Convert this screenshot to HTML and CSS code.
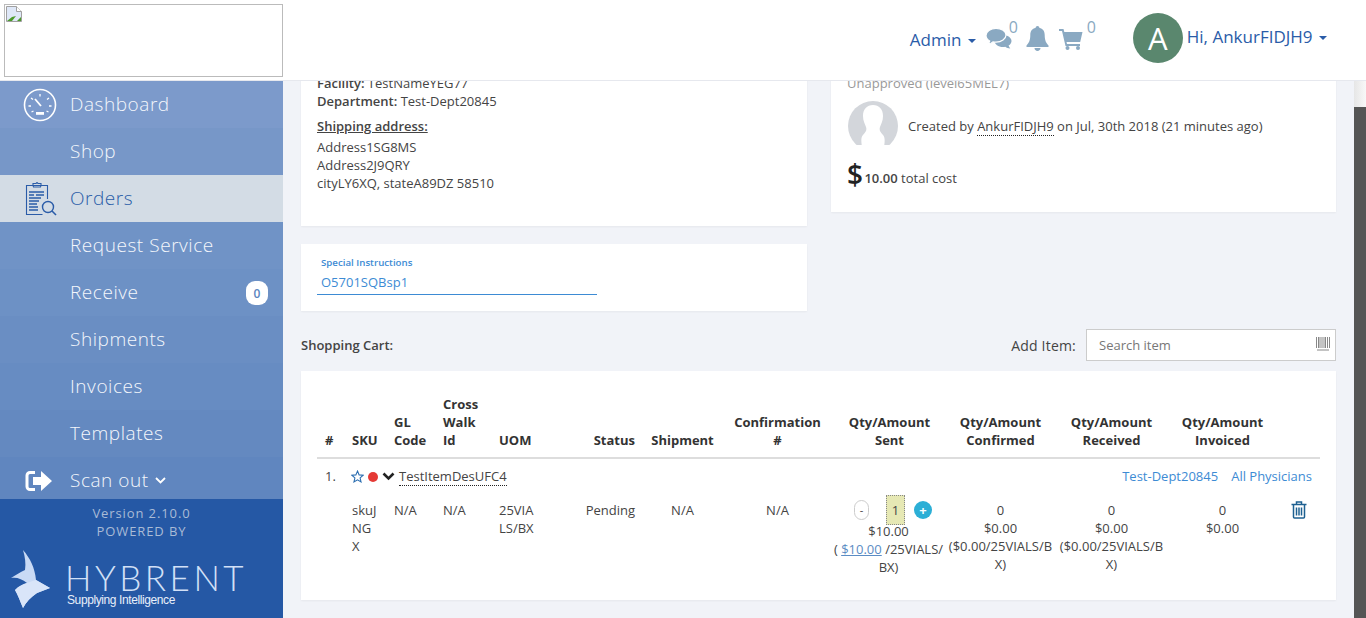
FILE: index.html
```html
<!DOCTYPE html>
<html lang="en">
<head>
  <meta charset="UTF-8">
  <title>Hybrent - Order</title>
  <link rel="stylesheet" href="styles.css">
</head>
<body>
  <header class="topbar">
    <div class="logo-box">
      <svg class="broken-img" width="16" height="16" viewBox="0 0 16 16">
        <path d="M.5.5h10l5 5v10H.5z" fill="#dfe8f8" stroke="#a0a0a0"/>
        <path d="M10.5.5v5h5" fill="#fff" stroke="#a0a0a0"/>
        <path d="M1 15l5-4 4-1-4 5z" fill="#4c9a2a"/>
        <path d="M11 15l4-4v4z" fill="#4c9a2a"/>
      </svg>
    </div>
    <nav class="topnav">
      <a class="admin-link">Admin <span class="caret"></span></a>
      <span class="top-icon chat">
        <svg width="26" height="21" viewBox="0 0 26 21">
          <path d="M17 7c-4.700 0-8.500 2.700-8.500 6s3.800 6 8.500 6c.8 0 1.600-.1 2.300-.2 1.200.9 3 1.600 5 1.700-.8-.8-1.400-1.800-1.700-2.900 1.800-1.100 2.900-2.800 2.900-4.600 0-3.300-3.800-6-8.500-6z" fill="#8aa9c2"/>
          <path d="M10 .5C4.500.5 0 3.700 0 7.600c0 2.200 1.400 4.200 3.700 5.500-.3 1.200-1 2.200-1.900 3 2-.2 3.800-1 5.100-2.200 1 .2 2 .3 3.100.3 5.500 0 10-3.200 10-7.100S15.500.5 10 .5z" fill="#8aa9c2" stroke="#fff" stroke-width="1.200"/>
        </svg>
        <sup>0</sup>
      </span>
      <span class="top-icon bell">
        <svg width="23" height="25" viewBox="0 0 23 25"><path d="M11.500 0c-1.100 0-1.800.8-1.800 1.800C6 2.600 4.300 5.400 4.300 9c0 5.500-1.500 8-3.800 10.500v1.500h22v-1.500C20.200 17 18.700 14.500 18.700 9c0-3.600-1.700-6.400-5.400-7.200 0-1-.7-1.800-1.800-1.800zM8.500 22c0 1.600 1.300 3 3 3s3-1.400 3-3z" fill="#8aa9c2"/></svg>
      </span>
      <span class="top-icon cart">
        <svg width="24" height="22" viewBox="0 0 24 22"><path d="M0 1h4.500l.8 3H23.500l-2.300 10H7.500l.5 2h13v2H6.500L3 3H0z" fill="#8aa9c2"/><circle cx="8.500" cy="20" r="2" fill="#8aa9c2"/><circle cx="19" cy="20" r="2" fill="#8aa9c2"/></svg>
        <sup>0</sup>
      </span>
      <span class="avatar">A</span>
      <a class="user-link">Hi, AnkurFIDJH9 <span class="caret"></span></a>
    </nav>
  </header>

  <div class="layout">
    <aside class="sidebar">
      <ul class="menu">
        <li class="menu-item shade-1">
          <svg class="menu-icon" width="34" height="34" viewBox="0 0 34 34" fill="none" stroke="#fff">
            <circle cx="17" cy="17" r="15.500" stroke-width="1.600"/>
            <path d="M17 6v2.500M8 10l2 1.500M26 10l-2 1.500M5.500 18H8M26 18h2.500M8.500 24l2-1M25.500 24l-2-1" stroke-width="1.300"/>
            <path d="M12 11l6 7" stroke-width="1.800"/>
            <path d="M13 24h8v2.800h-8z" fill="#fff" stroke="none"/>
          </svg>
          Dashboard
        </li>
        <li class="menu-item shade-2">Shop</li>
        <li class="menu-item active">
          <svg class="menu-icon orders" width="32" height="34" viewBox="0 0 32 34" fill="none" stroke="#2a5ca8" stroke-width="1.100">
            <path d="M22.500 17V3.500H1.500v29h16"/>
            <path d="M8 3.500V1.500h3l1-1 1 1h3v2l-.5 1.500H8.500z"/>
            <path d="M4 10h15M4 13h5M11 13h8M4 16h12M4 19h10M4 22h8M4 25h9M4 28h9" stroke-width="1.300"/>
            <circle cx="23" cy="25" r="5.500" stroke-width="1.400"/>
            <path d="M27 29l4 4" stroke-width="1.600"/>
          </svg>
          Orders
        </li>
        <li class="menu-item shade-3">Request Service</li>
        <li class="menu-item shade-4">Receive <span class="count">0</span></li>
        <li class="menu-item shade-5">Shipments</li>
        <li class="menu-item shade-6">Invoices</li>
        <li class="menu-item shade-7">Templates</li>
        <li class="menu-item shade-8">
          <svg class="menu-icon scan" width="28" height="22" viewBox="0 0 28 22">
            <path d="M10 2.500H5A3 3 0 0 0 2 5.500v11a3 3 0 0 0 3 3h5" fill="none" stroke="#fff" stroke-width="3"/>
            <path d="M8 7h8V1l11 10-11 10v-6H8z" fill="#fff"/>
          </svg>
          Scan out
          <svg class="small-chevron" width="11" height="7" viewBox="0 0 11 7" fill="none" stroke="#fff" stroke-width="1.800"><path d="M1 1l4.500 4.500L10 1"/></svg>
        </li>
      </ul>
      <div class="side-foot">
        <div class="version">Version 2.10.0</div>
        <div class="powered">POWERED BY</div>
        <div class="brand">
          <svg class="brand-mark" width="40" height="58" viewBox="0 0 40 58">
            <path d="M13 0c2 7 3 13 2 20-5 2-9 5-14 8 6-1 11 1 16 5-4 1-8 3-12 7 3 5 5 11 8 18 3-6 8-11 14-15l13-5-14-8C25 18 20 8 13 0z" fill="#c9daf5"/>
            <path d="M17 33c-4 1-8 3-12 7 3 5 5 11 8 18 3-6 8-11 14-15l13-5-14-8c-3 1-7 2-9 3z" fill="#d9e5f9"/>
          </svg>
          <div class="brand-text">
            <div class="brand-name">HYBRENT</div>
            <div class="brand-tag">Supplying Intelligence</div>
          </div>
        </div>
      </div>
    </aside>

    <main class="content">
      <div class="scroll-inner">
        <div class="row">
          <section class="card address-card">
            <p class="first-line"><b>Facility:</b> TestNameYEG77</p>
            <p><b>Department:</b> Test-Dept20845</p>
            <p class="ship-title">Shipping address:</p>
            <p>Address1SG8MS</p>
            <p>Address2J9QRY</p>
            <p>cityLY6XQ, stateA89DZ 58510</p>
          </section>
          <section class="card summary-card">
            <p class="approval first-line">Unapproved (level65MEL7)</p>
            <div class="created">
              <svg class="user-pic" width="50" height="50" viewBox="0 0 50 50">
                <defs><clipPath id="pic-clip"><path d="M0 0h50v44H0z"/></clipPath></defs>
                <g clip-path="url(#pic-clip)">
                  <circle cx="25" cy="25" r="25" fill="#d3d6db"/>
                  <path d="M25 4c-6 0-10 4-10 11 0 5 2 8 3 11 1 3 0 5-3 8-2 2-2 6-1 12h22c1-6 1-10-1-12-3-3-4-5-3-8 1-3 3-6 3-11 0-7-4-11-10-11z" fill="#fff"/>
                </g>
              </svg>
              <span>Created by <span class="dotted">AnkurFIDJH9</span> on Jul, 30th 2018 (21 minutes ago)</span>
            </div>
            <div class="total"><span class="dollar">$</span> <b>10.00</b> total cost</div>
          </section>
        </div>

        <div class="row">
          <section class="card notes-card">
            <label class="notes-label">Special Instructions</label>
            <div class="notes-value">O5701SQBsp1</div>
          </section>
        </div>

        <div class="cart-head">
          <b>Shopping Cart:</b>
          <div class="add-item">
            <span>Add Item:</span>
            <div class="search-box">
              Search item
              <svg class="barcode" width="14" height="14" viewBox="0 0 14 14" fill="none" stroke="#888"><path d="M.5 0v11M2.500 0v11M4 0v11M6 0v11M8 0v11M9.500 0v11M11.500 0v11M13.500 0v11M1 13h12" stroke-width="1"/></svg>
            </div>
          </div>
        </div>

        <section class="card cart-card">
          <table class="cart-table">
            <colgroup>
              <col><col><col><col><col><col><col><col><col><col><col><col><col>
            </colgroup>
            <thead>
              <tr>
                <th>#</th>
                <th>SKU</th>
                <th>GL Code</th>
                <th>Cross Walk Id</th>
                <th>UOM</th>
                <th class="end">Status</th>
                <th class="mid">Shipment</th>
                <th class="mid">Confirmation #</th>
                <th class="mid tight">Qty/Amount Sent</th>
                <th class="mid tight">Qty/Amount Confirmed</th>
                <th class="mid tight">Qty/Amount Received</th>
                <th class="mid tight">Qty/Amount Invoiced</th>
                <th></th>
              </tr>
            </thead>
            <tbody>
              <tr class="item-title">
                <td>1.</td>
                <td colspan="7">
                  <div class="item-name">
                    <svg width="13" height="13" viewBox="0 0 24 24" fill="none" stroke="#2a6db0" stroke-width="2"><path d="M12 2l3 7 7.500.7-5.700 5 1.700 7.300-6.500-3.900L5.500 22l1.700-7.300-5.700-5L9 9z"/></svg>
                    <span class="red-dot"></span>
                    <svg width="13" height="9" viewBox="0 0 13 9" fill="none" stroke="#222" stroke-width="2.600"><path d="M1.500 1.500l5 5 5-5"/></svg>
                    <span class="dotted">TestItemDesUFC4</span>
                  </div>
                </td>
                <td colspan="5" class="item-links"><a>Test-Dept20845</a><a>All Physicians</a></td>
              </tr>
              <tr class="item-detail">
                <td></td>
                <td class="breakall">skuJNGX</td>
                <td>N/A</td>
                <td>N/A</td>
                <td class="breakall">25VIALS/BX</td>
                <td class="end">Pending</td>
                <td class="mid">N/A</td>
                <td class="mid">N/A</td>
                <td class="mid flush">
                  <div class="qty">
                    <span class="qty-minus">-</span>
                    <span class="qty-val">1</span>
                    <span class="qty-plus">+</span>
                  </div>
                  <div>$10.00<br>( <a class="price-link">$10.00</a> /25VIALS/<wbr>BX)</div>
                </td>
                <td class="mid tight breakall">0<br>$0.00<br>($0.00/25VIALS/BX)</td>
                <td class="mid tight breakall">0<br>$0.00<br>($0.00/25VIALS/BX)</td>
                <td class="mid tight">0<br>$0.00</td>
                <td class="trash-cell">
                  <svg width="16" height="18" viewBox="0 0 16 18" fill="none" stroke="#1e6091" stroke-width="1.500"><path d="M.5 3.500h15M5.500 3V1h5v2M2.500 3.500v12.500a1 1 0 0 0 1 1h9a1 1 0 0 0 1-1V3.500M5.500 6.500v8M8 6.500v8M10.500 6.500v8"/></svg>
                </td>
              </tr>
            </tbody>
          </table>
        </section>
      </div>
      <div class="scrollbar"><div class="scroll-thumb"></div></div>
    </main>
  </div>
</body>
</html>
```

FILE: styles.css
```css
* {
  box-sizing: border-box;
}
html, body {
  height: 100%;
}
body {
  margin: 0;
  overflow: hidden;
  font-family: "Open Sans", sans-serif;
  font-size: 13px;
  color: #444;
  background-color: #f1f3f8;
  display: flex;
  flex-direction: column;
}
p {
  margin: 0;
}

/* top bar */
.topbar {
  height: 81px;
  flex: none;
  background: #fff;
  border-bottom: 1px solid #e6e8ee;
  display: flex;
  justify-content: space-between;
  padding: 4px 0 0 4px;
}
.logo-box {
  width: 279px;
  height: 73px;
  border: 1px solid #bbb;
  padding: 1px;
}
.broken-img {
  display: block;
}
.topnav {
  display: flex;
  align-items: flex-start;
  padding-right: 39px;
  color: #2a5ca8;
}
.admin-link {
  font-size: 17px;
  margin-top: 24px;
  margin-right: 10px;
}
.caret {
  display: inline-block;
  width: 0;
  height: 0;
  margin-left: 2px;
  vertical-align: middle;
  border-top: 4px solid #2a5ca8;
  border-left: 4px solid transparent;
  border-right: 4px solid transparent;
}
.top-icon {
  display: flex;
  color: #8aa9c2;
}
.top-icon svg {
  flex: none;
}
.top-icon sup {
  font-size: 16px;
  line-height: 16px;
  vertical-align: baseline;
}
.chat {
  margin-top: 24px;
  width: 39px;
}
.chat sup {
  margin-top: -9px;
  margin-left: -3px;
}
.bell {
  margin-top: 22px;
  width: 34px;
  padding-left: 1px;
}
.cart {
  margin-top: 24px;
  width: 74px;
}
.cart sup {
  margin-top: -9px;
  margin-left: 4px;
}
.avatar {
  width: 50px;
  height: 50px;
  margin-top: 9px;
  border-radius: 50%;
  background: #5a876e;
  color: #fff;
  font-size: 31px;
  line-height: 50px;
  text-align: center;
}
.user-link {
  font-size: 17px;
  margin-top: 21px;
  margin-left: 4px;
}

/* sidebar */
.layout {
  flex: 1;
  display: flex;
  min-height: 0;
}
.sidebar {
  width: 283px;
  flex: none;
  background: #2558a5;
  display: flex;
  flex-direction: column;
}
.menu {
  list-style: none;
  margin: 0;
  padding: 0;
}
.menu-item {
  position: relative;
  height: 47px;
  padding: 0 0 2px 70px;
  display: flex;
  align-items: center;
  color: #f4f7fc;
  font-size: 19px;
  font-weight: 300;
  letter-spacing: .55px;
}
.menu-item.shade-1 { background: #7c9acb; }
.menu-item.shade-2 { background: #7797c8; }
.menu-item.active { background: #d3dce5; color: #2a5ca8; }
.menu-item.shade-3 { background: #7093c6; }
.menu-item.shade-4 { background: #6d91c5; }
.menu-item.shade-5 { background: #6a8ec3; }
.menu-item.shade-6 { background: #678cc2; }
.menu-item.shade-7 { background: #6489c0; }
.menu-item.shade-8 { background: #6086bf; height: 42px; padding: 4px 0 0 70px; }
.menu-icon {
  position: absolute;
  left: 23px;
  top: 7px;
}
.menu-icon.orders {
  left: 25px;
  top: 7px;
}
.menu-icon.scan {
  left: 25px;
  top: 13px;
}
.small-chevron {
  margin-left: 6px;
}
.count {
  position: absolute;
  right: 15px;
  top: 12px;
  width: 22px;
  height: 24px;
  border-radius: 9px;
  background: #fff;
  color: #5b85c0;
  font-size: 12px;
  font-weight: 600;
  letter-spacing: 0;
  line-height: 25px;
  text-align: center;
}
.side-foot {
  flex: 1;
  text-align: center;
  color: #a9bbd6;
  font-size: 13px;
  letter-spacing: .9px;
  line-height: 18px;
  padding-top: 5px;
}
.brand {
  display: flex;
  text-align: left;
  margin-top: 10px;
  padding-left: 10px;
}
.brand-text {
  margin-left: 17px;
  padding-top: 12px;
}
.brand-name {
  font-family: Lato, sans-serif;
  font-size: 35px;
  line-height: 30px;
  letter-spacing: 3.500px;
  margin-left: -2px;
  color: #d2e0f7;
  font-weight: 300;
}
.brand-tag {
  font-family: "Liberation Sans", sans-serif;
  font-size: 12px;
  line-height: 14px;
  letter-spacing: -.4px;
  margin-top: 1px;
  color: #e8effa;
}

/* main content */
.content {
  flex: 1;
  position: relative;
  overflow: hidden;
}
.scroll-inner {
  margin-top: -6px;
  padding: 0 30px 0 18px;
}
.row {
  display: flex;
  gap: 24px;
  margin-bottom: 18px;
}
.card {
  background: #fff;
  box-shadow: 0 1px 2px rgba(0, 0, 0, .05);
}
.first-line {
  margin-top: -1px;
}
.address-card {
  width: 506px;
  height: 151px;
  padding: 0 16px;
  line-height: 18px;
}
.address-card b {
  color: #444;
  font-weight: 600;
}
.ship-title {
  font-weight: 600;
  text-decoration: underline;
  margin: 7px 0 3px;
}
.summary-card {
  width: 505px;
  height: 137px;
  padding: 0 16px;
}
.approval {
  color: #999;
  line-height: 18px;
}
.created {
  display: flex;
  align-items: center;
  gap: 10px;
  margin-top: 9px;
  padding-left: 1px;
}
.dotted {
  border-bottom: 1px dotted #222;
}
.total {
  margin-top: 6px;
}
.total b {
  font-weight: 600;
}
.dollar {
  font-size: 28px;
  line-height: 34px;
  letter-spacing: -2px;
  color: #222;
  font-weight: 600;
  vertical-align: -2px;
}
.notes-card {
  width: 506px;
  height: 67px;
  padding: 13px 16px 0;
}
.notes-label {
  display: block;
  font-size: 9.700px;
  font-weight: 600;
  color: #3d8bd4;
  padding-left: 4px;
  line-height: 12px;
}
.notes-value {
  width: 280px;
  padding: 4px 4px 3px;
  line-height: 18px;
  color: #3d8bd4;
  border-bottom: 1px solid #3d8bd4;
}
.cart-head {
  display: flex;
  justify-content: space-between;
  align-items: center;
  height: 32px;
}
.cart-head b {
  font-weight: 600;
}
.add-item {
  display: flex;
  align-items: center;
  gap: 10px;
  font-size: 14px;
  letter-spacing: .2px;
}
.search-box {
  position: relative;
  width: 250px;
  height: 32px;
  background: #fff;
  border: 1px solid #ccc;
  padding-left: 12px;
  font-size: 13px;
  letter-spacing: 0;
  line-height: 30px;
  color: #777;
}
.barcode {
  position: absolute;
  right: 5px;
  top: 7px;
}
.cart-card {
  margin-top: 10px;
  width: 1035px;
  height: 229px;
  padding: 24px 16px 0;
}
.cart-table {
  width: 1003px;
  table-layout: fixed;
  border-collapse: collapse;
  line-height: 18px;
}
.cart-table col:nth-child(1) { width: 27px; }
.cart-table col:nth-child(2) { width: 42px; }
.cart-table col:nth-child(3) { width: 49px; }
.cart-table col:nth-child(4) { width: 56px; }
.cart-table col:nth-child(5) { width: 56px; }
.cart-table col:nth-child(6) { width: 96px; }
.cart-table col:nth-child(7) { width: 79px; }
.cart-table col:nth-child(n+8) { width: 111px; }
.cart-table col:nth-child(13) { width: 43px; }
.cart-table th {
  text-align: left;
  vertical-align: bottom;
  font-weight: 700;
  color: #333;
  padding: 0 8px 8px;
  border-bottom: 2px solid #ddd;
  height: 63px;
}
.cart-table td {
  padding: 0 8px;
  vertical-align: top;
}
.cart-table th.mid, .cart-table td.mid {
  text-align: center;
}
.cart-table th.end, .cart-table td.end {
  text-align: right;
}
.cart-table th.tight, .cart-table td.tight {
  padding-left: 4px;
  padding-right: 2px;
}
.cart-table td.flush {
  padding-left: 0;
  padding-right: 0;
}
.item-title td {
  padding-top: 8px;
  padding-bottom: 15px;
}
.item-name {
  display: flex;
  align-items: center;
  gap: 4px;
  margin-left: -1px;
  line-height: 18px;
}
.red-dot {
  width: 10px;
  height: 10px;
  border-radius: 50%;
  background: #e53935;
}
.cart-table td.item-links {
  text-align: right;
  color: #3d8bd4;
}
.item-links a {
  margin-left: 13px;
}
.breakall {
  word-break: break-all;
}
.qty {
  display: flex;
  align-items: center;
  justify-content: center;
  height: 30px;
  margin: -6px 0 -3px 9px;
}
.qty-minus {
  width: 15px;
  height: 20px;
  border: 1px solid #ccc;
  border-radius: 8px;
  font-size: 11px;
  line-height: 18px;
  margin-right: 17px;
}
.qty-val {
  width: 19px;
  height: 30px;
  background: #e6e8b4;
  border: 1px dotted #888;
  line-height: 28px;
  margin-right: 9px;
}
.qty-plus {
  width: 18px;
  height: 18px;
  border-radius: 50%;
  background: #2cafd6;
  color: #fff;
  font-weight: 700;
  line-height: 18px;
}
.price-link {
  color: #5b8cc4;
  text-decoration: underline;
}
.cart-table td.trash-cell {
  text-align: right;
  padding-right: 13px;
}

.scrollbar {
  position: absolute;
  top: 0;
  right: 0;
  bottom: 0;
  width: 12px;
  background: #555;
}
.scroll-thumb {
  height: 26px;
  background: linear-gradient(to right, #e6e6e6, #f8f8f8);
}
```
